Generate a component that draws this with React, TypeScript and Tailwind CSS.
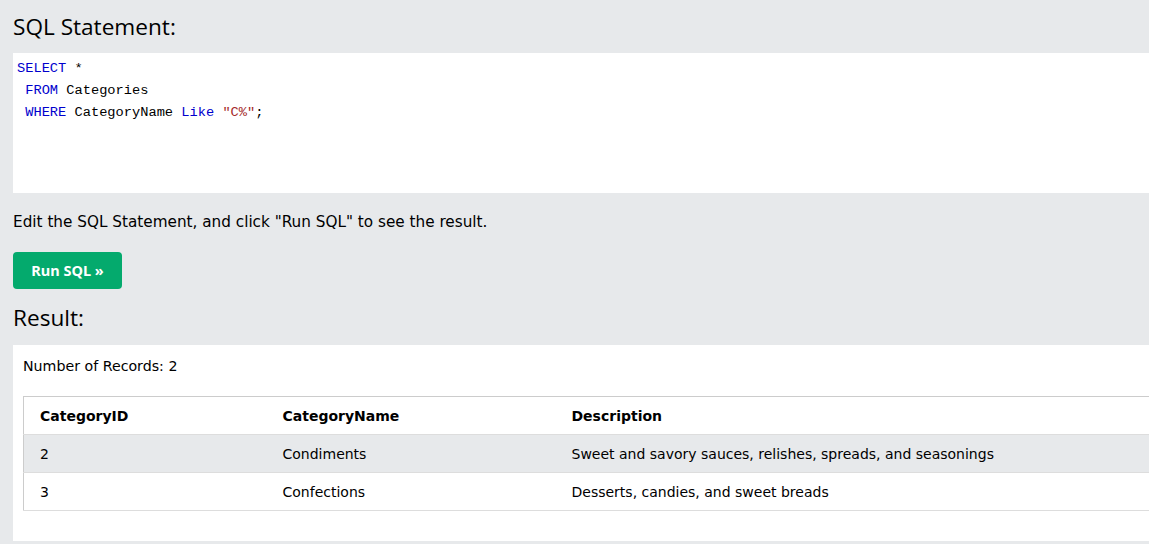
import React from "react";

const rows = [
  { id: "2", name: "Condiments", desc: "Sweet and savory sauces, relishes, spreads, and seasonings" },
  { id: "3", name: "Confections", desc: "Desserts, candies, and sweet breads" },
];

export default function App() {
  const body = { fontFamily: '"DejaVu Sans", Verdana, sans-serif' };
  const head = { fontFamily: '"Open Sans", "Segoe UI", sans-serif' };
  return (
    <div className="w-[1149px] h-[544px] overflow-hidden bg-[#E7E9EB] text-black pl-[13px]" style={body}>
      <h2 className="text-[22.6px] leading-[30px] pt-[12px] pb-[11px] font-normal" style={head}>SQL Statement:</h2>
      <div className="bg-white h-[140px] pl-[4px] pt-[5px] text-[13.7px] leading-[22px]" style={{ fontFamily: '"Liberation Mono", Consolas, monospace' }}>
        <div><span className="text-[#0000CD]">SELECT</span> *</div>
        <div>&nbsp;<span className="text-[#0000CD]">FROM</span> Categories</div>
        <div>&nbsp;<span className="text-[#0000CD]">WHERE</span> CategoryName <span className="text-[#0000CD]">Like</span> <span className="text-[#A52A2A]">"C%"</span>;</div>
      </div>
      <p className="text-[15.25px] leading-[20px] mt-[19px]">Edit the SQL Statement, and click "Run SQL" to see the result.</p>
      <button className="mt-[20px] w-[109px] h-[37px] bg-[#04AA6D] rounded-[4px] text-white font-bold text-[14.5px]" style={{ fontFamily: '"Noto Sans", "Segoe UI", sans-serif' }}>Run SQL »</button>
      <h2 className="text-[22.6px] leading-[30px] pt-[14px] pb-[12px] font-normal" style={head}>Result:</h2>
      <div className="bg-white h-[196px] pl-[10px] pt-[11px]">
        <div className="text-[14.2px] leading-[20px]">Number of Records: 2</div>
        <table className="mt-[20px] w-[1200px] border border-[#cccccc] border-collapse text-[14px]">
          <tbody>
            <tr className="h-[38px] border-b border-[#dddddd]">
              <th className="text-left pl-[16px] pt-[1px] w-[243px] font-bold">CategoryID</th>
              <th className="text-left pl-[16px] pt-[1px] w-[289px] font-bold">CategoryName</th>
              <th className="text-left pl-[16px] pt-[1px] font-bold">Description</th>
            </tr>
            {rows.map((r, i) => (
              <tr key={r.id} className={`h-[38px] border-b border-[#dddddd] ${i === 0 ? "bg-[#E7E9EB]" : "bg-white"}`}>
                <td className="pl-[16px] pt-[1px]">{r.id}</td>
                <td className="pl-[16px] pt-[1px]">{r.name}</td>
                <td className="pl-[16px] pt-[1px]">{r.desc}</td>
              </tr>
            ))}
          </tbody>
        </table>
      </div>
    </div>
  );
}
